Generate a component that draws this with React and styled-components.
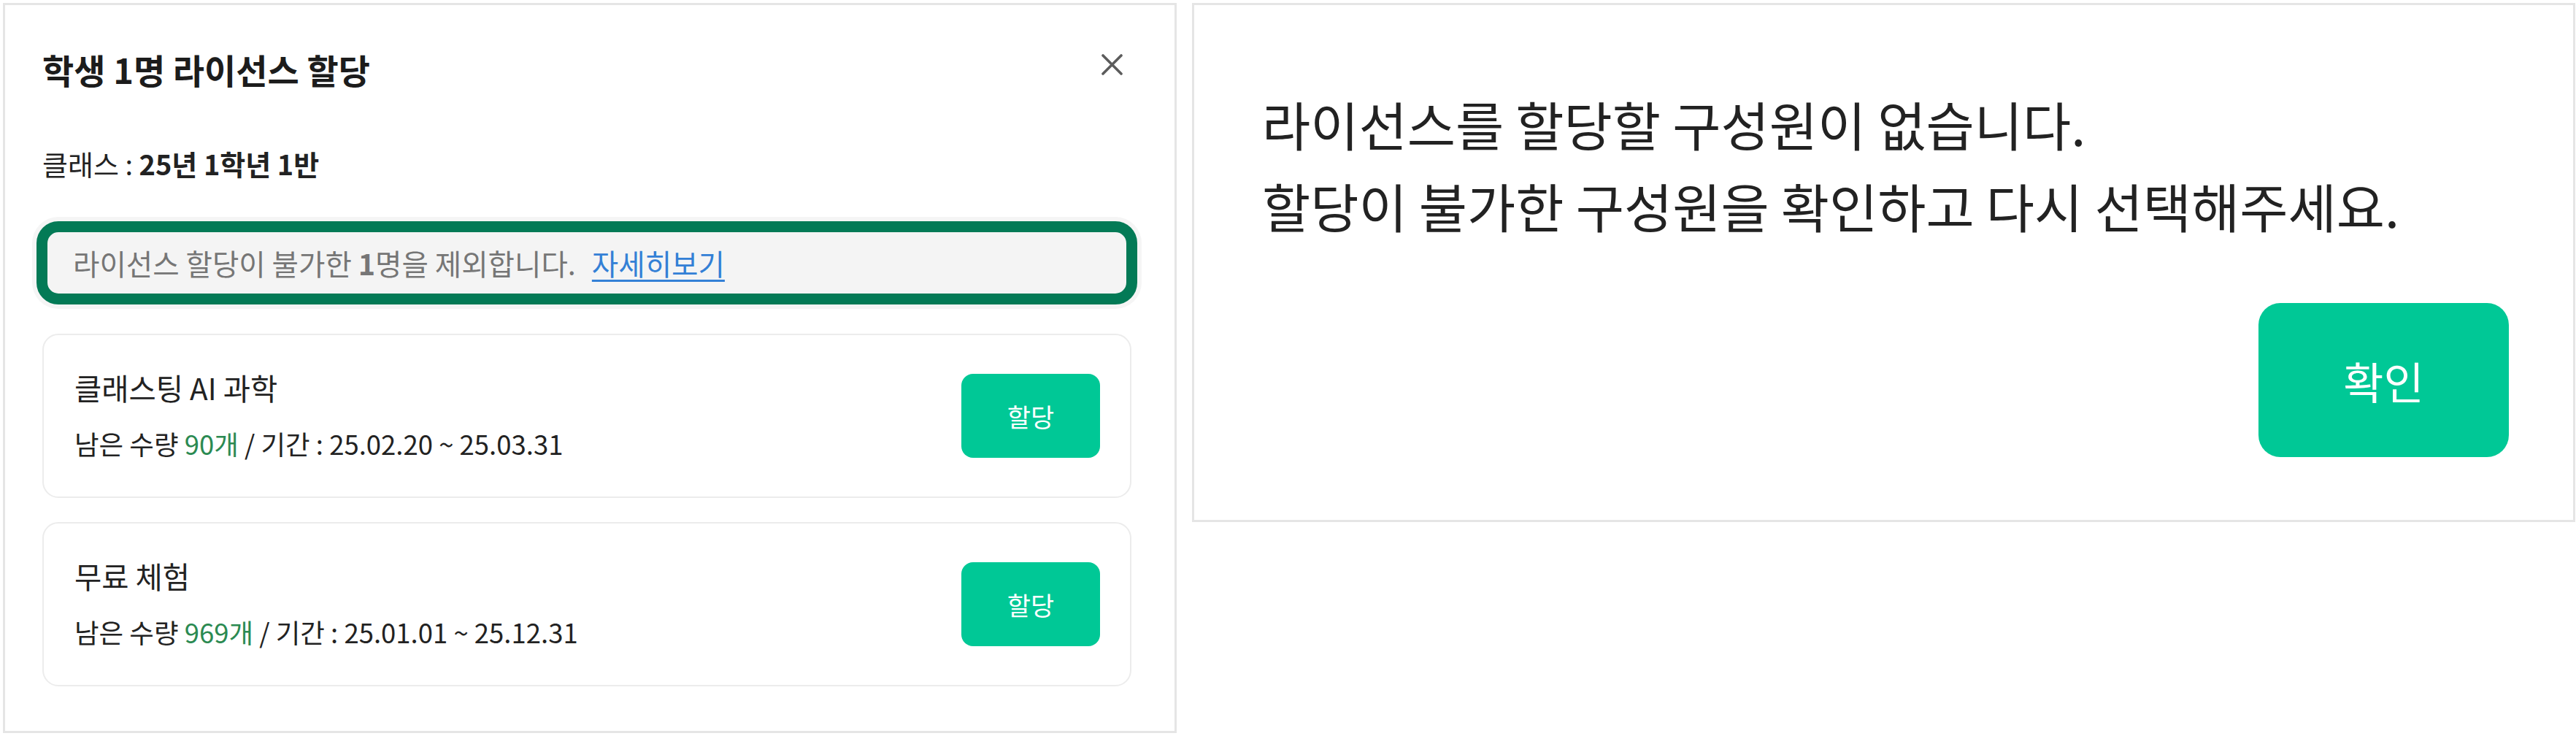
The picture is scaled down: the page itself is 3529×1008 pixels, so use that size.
import React from 'react';
import styled, {createGlobalStyle} from 'styled-components';

const GlobalStyle = createGlobalStyle`
  html, body {
    margin: 0;
    padding: 0;
    background: #ffffff;
  }
  body {
    font-family: "Noto Sans CJK KR", "Noto Sans", sans-serif;
    color: #222222;
  }
  * {
    box-sizing: border-box;
  }
`;

const StyledPage = styled.div`
  display: flex;
  align-items: flex-start;
  gap: 21px;
  padding: 4px 1px 0 4px;
  width: 3529px;
  height: 1008px;
`;

const StyledPanel = styled.div`
  border: 3px solid #e5e5e5;
  background: #ffffff;
`;

const StyledDialog = styled(StyledPanel)`
  width: 1608px;
  height: 1000px;
  padding: 55px 59px 0 51px;
  display: flex;
  flex-direction: column;
`;

const StyledHeader = styled.div`
  display: flex;
  justify-content: space-between;
  align-items: flex-start;
`;

const StyledTitle = styled.h1`
  margin: 0;
  font-size: 47px;
  line-height: 66px;
  font-weight: 700;
  color: #1c1c1c;
`;

const StyledClose = styled.button`
  border: 0;
  padding: 0;
  background: none;
  margin: 12px 12px 0 0;
  width: 29px;
  height: 29px;
  display: flex;
  cursor: pointer;
`;

const StyledClass = styled.div`
  margin-top: 69px;
  font-size: 38px;
  line-height: 54px;
  color: #222222;

  b {
    font-weight: 700;
  }
`;

const StyledNotice = styled.div`
  margin: 52px -8px 0 -8px;
  height: 114px;
  padding-left: 35px;
  border: 15px solid #037a56;
  border-radius: 30px;
  background: #f4f4f4;
  box-shadow: 0 0 0 6px #f5f5f5;
  font-size: 39.6px;
  line-height: 84px;
  color: #767676;

  b {
    font-weight: 700;
  }
`;

const StyledLink = styled.a`
  margin-left: 22px;
  color: #3380d6;
  text-decoration: underline;
  text-underline-offset: 6px;
  text-decoration-thickness: 3px;
  cursor: pointer;
`;

const StyledCardList = styled.div`
  margin-top: 40px;
  display: flex;
  flex-direction: column;
  gap: 33px;
`;

const StyledCard = styled.div`
  height: 225px;
  border: 2px solid #ececec;
  border-radius: 22px;
  padding: 0 41px 0 42px;
  display: flex;
  align-items: center;
  justify-content: space-between;
`;

const StyledCardInfo = styled.div`
  display: flex;
  flex-direction: column;
  gap: 27px;
`;

const StyledCardName = styled.div`
  font-size: 40.5px;
  line-height: 50px;
  color: #222222;
`;

const StyledCardMeta = styled.div`
  font-size: 36.5px;
  line-height: 50px;
  color: #222222;
`;

const StyledCount = styled.span`
  color: #2b8a52;
`;

const StyledGreenButton = styled.button`
  border: 0;
  background: #00c896;
  color: #ffffff;
  font-family: "Noto Sans CJK KR", "Noto Sans", sans-serif;
  font-size: ${(props) => (props.large ? '60px' : '35px')};
  width: ${(props) => (props.large ? '343px' : '190px')};
  height: ${(props) => (props.large ? '211px' : '115px')};
  border-radius: ${(props) => (props.large ? '30px' : '16px')};
  cursor: pointer;
`;

const StyledAlert = styled(StyledPanel)`
  flex: 1;
  height: 711px;
  padding: 106px 88px 0 93px;
  display: flex;
  flex-direction: column;
`;

const StyledMessage = styled.p`
  margin: 0;
  font-size: 72px;
  line-height: 112px;
  color: #222222;
`;

const StyledAlertFooter = styled.div`
  margin-top: 78px;
  display: flex;
  justify-content: flex-end;
`;

const CloseIcon = () => (
  <svg width="29" height="29" viewBox="0 0 29 29" fill="none">
    <path d="M2 2L27 27M27 2L2 27" stroke="#5c5c5c" strokeWidth="3.6" strokeLinecap="round" />
  </svg>
);

const licenses = [
  {name: '클래스팅 AI 과학', count: '90개', period: '25.02.20 ~ 25.03.31'},
  {name: '무료 체험', count: '969개', period: '25.01.01 ~ 25.12.31'},
];

export default function App() {
  return (
    <>
      <GlobalStyle />
      <StyledPage>
        <StyledDialog>
          <StyledHeader>
            <StyledTitle>학생 1명 라이선스 할당</StyledTitle>
            <StyledClose aria-label="닫기">
              <CloseIcon />
            </StyledClose>
          </StyledHeader>

          <StyledClass>
            클래스 : <b>25년 1학년 1반</b>
          </StyledClass>

          <StyledNotice>
            라이선스 할당이 불가한 <b>1</b>명을 제외합니다.
            <StyledLink>자세히보기</StyledLink>
          </StyledNotice>

          <StyledCardList>
            {licenses.map((item) => (
              <StyledCard key={item.name}>
                <StyledCardInfo>
                  <StyledCardName>{item.name}</StyledCardName>
                  <StyledCardMeta>
                    남은 수량 <StyledCount>{item.count}</StyledCount> / 기간 : {item.period}
                  </StyledCardMeta>
                </StyledCardInfo>
                <StyledGreenButton>할당</StyledGreenButton>
              </StyledCard>
            ))}
          </StyledCardList>
        </StyledDialog>

        <StyledAlert>
          <StyledMessage>
            라이선스를 할당할 구성원이 없습니다.
            <br />
            할당이 불가한 구성원을 확인하고 다시 선택해주세요.
          </StyledMessage>
          <StyledAlertFooter>
            <StyledGreenButton large>확인</StyledGreenButton>
          </StyledAlertFooter>
        </StyledAlert>
      </StyledPage>
    </>
  );
}
